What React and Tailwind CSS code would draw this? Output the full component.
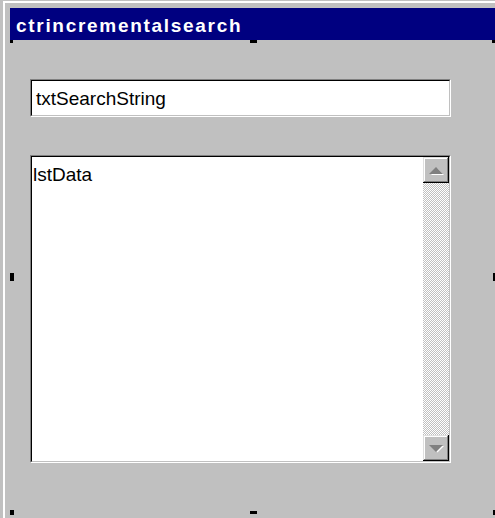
import React from "react";

// Raised 3D bevel used by the scroll buttons
const raised =
  "shadow-[inset_-1px_-1px_0_#000000,inset_1px_1px_0_#dfdfdf,inset_-2px_-2px_0_#808080,inset_2px_2px_0_#ffffff]";

// Disabled (greyed) scroll arrow with a white etch
const Arrow = ({ up }) => (
  <svg width="26" height="26" viewBox="0 0 26 26" className="block">
    {up ? (
      <>
        <polygon points="7,17 20,17 13.5,10.5" fill="#ffffff" transform="translate(1,1)" />
        <polygon points="6,17 20,17 13,10" fill="#808080" />
      </>
    ) : (
      <>
        <polygon points="7,10 20,10 13.5,16.5" fill="#ffffff" transform="translate(1,1)" />
        <polygon points="6,10 20,10 13,17" fill="#808080" />
      </>
    )}
  </svg>
);

// Sunken field: grey/white outer edge, black/silver inner edge
const Sunken = ({ className, children }) => (
  <div className={`border border-t-[#808080] border-l-[#808080] border-b-white border-r-white ${className}`}>
    <div className="h-full border border-t-black border-l-black border-b-[#c0c0c0] border-r-[#c0c0c0] bg-white">
      {children}
    </div>
  </div>
);

const Handle = ({ className }) => <div className={`absolute bg-black ${className}`} />;

export default function App() {
  return (
    <div
      className="relative w-[495px] h-[518px] overflow-hidden bg-[#c0c0c0] pt-px pl-[3px] text-black"
      style={{ fontFamily: '"Liberation Sans", Arial, sans-serif' }}
    >
      <div className="h-full border-t-2 border-l-2 border-white pt-[5px] pl-[5px]">
        {/* caption bar */}
        <div className="h-[32px] bg-[#000080] pl-[6px] pt-[8px]">
          <span className="block text-[19px] leading-[19px] font-bold text-white tracking-[1.7px]">
            ctrincrementalsearch
          </span>
        </div>

        <div className="flex flex-col gap-[38px] pl-[20px] pt-[39px]">
          <Sunken className="w-[421px] h-[38px]">
            <div className="pl-[4px] pt-[8px] text-[19px] leading-[19px]">txtSearchString</div>
          </Sunken>

          <Sunken className="w-[421px] h-[308px]">
            <div className="flex h-full">
              <div className="flex-1 pl-px pt-[8px] text-[19px] leading-[19px]">lstData</div>
              <div className="flex w-[26px] flex-col">
                <div className={`h-[26px] bg-[#c0c0c0] ${raised}`}>
                  <Arrow up />
                </div>
                <div className="flex-1 bg-[repeating-conic-gradient(#c0c0c0_0%_25%,#ffffff_0%_50%)] bg-[length:2px_2px]" />
                <div className={`h-[26px] bg-[#c0c0c0] ${raised}`}>
                  <Arrow />
                </div>
              </div>
            </div>
          </Sunken>
        </div>
      </div>

      {/* selection grips around the designer surface */}
      <Handle className="left-[10px] top-[40px] w-[3px] h-[3px]" />
      <Handle className="left-[250px] top-[40px] w-[7px] h-[3px]" />
      <Handle className="left-[492px] top-[40px] w-[3px] h-[3px]" />
      <Handle className="left-[10px] top-[273px] w-[4px] h-[8px]" />
      <Handle className="left-[493px] top-[273px] w-[2px] h-[8px]" />
      <Handle className="left-[10px] top-[510px] w-[4px] h-[5px]" />
      <Handle className="left-[250px] top-[511px] w-[7px] h-[3px]" />
      <Handle className="left-[493px] top-[510px] w-[2px] h-[5px]" />
    </div>
  );
}
